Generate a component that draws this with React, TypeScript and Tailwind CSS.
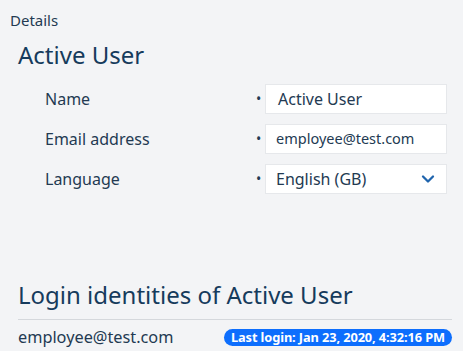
import { ChevronDown } from "lucide-react";

const font = { fontFamily: '"Noto Sans", "Open Sans", sans-serif' };

function Field({ label, children }: { label: string; children: React.ReactNode }) {
  return (
    <div className="flex items-center h-[30px]">
      <div className="w-[238px] pl-[27px] text-[16px] text-[#233a52]">{label}</div>
      <div className="w-[9px] text-[#233a52] text-[14px] leading-none">•</div>
      <div className="w-[182px] h-[30px] bg-white border border-[#e6e8eb] flex items-center">
        {children}
      </div>
    </div>
  );
}

export default function App() {
  return (
    <div className="w-[463px] h-[351px] bg-[#f3f4f6] overflow-hidden" style={font}>
      <div className="pt-[10px] pl-[10px] text-[15px] leading-[20px] text-[#233a52]">Details</div>
      <div className="pl-[18px] pr-[11px]">
        <h2 className="mt-[10px] text-[24px] leading-[30px] text-[#163b5c]">Active User</h2>
        <div className="mt-[14px] flex flex-col gap-[10px]">
          <Field label="Name">
            <span className="pl-[12px] text-[16px] text-[#233a52]">Active User</span>
          </Field>
          <Field label="Email address">
            <span className="pl-[10px] text-[14.5px] text-[#233a52]">employee@test.com</span>
          </Field>
          <Field label="Language">
            <span className="pl-[10px] text-[16px] text-[#233a52] flex-1">English (GB)</span>
            <ChevronDown className="mr-[8px] w-[20px] h-[20px] text-[#1f64ad]" strokeWidth={2.75} />
          </Field>
        </div>
        <h2 className="mt-[86px] text-[24px] leading-[30px] text-[#163b5c]">Login identities of Active User</h2>
        <div className="mt-[9px] border-t border-[#d5d8dc] flex items-center justify-between pt-[7px]">
          <span className="text-[16.3px] leading-[20px] text-[#233a52]">employee@test.com</span>
          <span className="h-[17px] px-[7px] rounded-full bg-[#0d6efd] text-white text-[12.8px] font-bold leading-[17px] tracking-[-0.1px]">
            Last login: Jan 23, 2020, 4:32:16 PM
          </span>
        </div>
      </div>
    </div>
  );
}
